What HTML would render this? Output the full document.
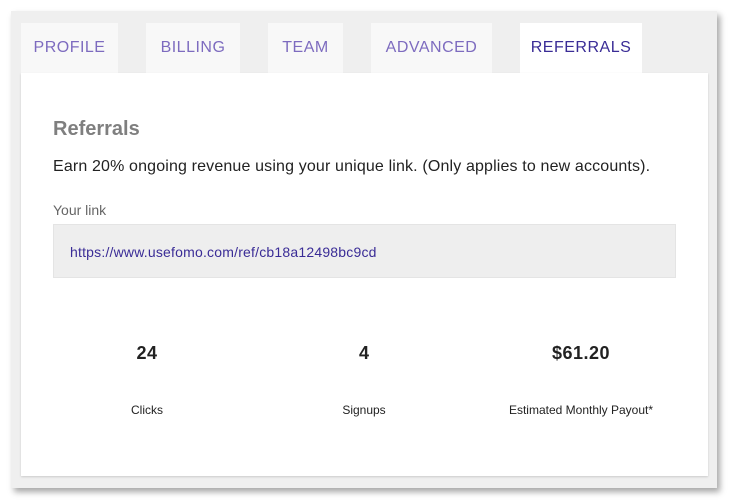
<!DOCTYPE html>
<html><head><style>
body{margin:0;width:734px;height:503px;background:#fff;position:relative;font-family:"Liberation Sans",sans-serif;overflow:hidden}
.frame{position:absolute;left:11px;top:11px;width:706px;height:477px;background:#efefef;box-shadow:3px 4px 6px rgba(0,0,0,.35)}
.tab{position:absolute;top:23px;height:50px;background:#f8f8f8;color:#7d6bbf;font-size:16px;line-height:50px;text-align:center;letter-spacing:.5px}
.tab.on{background:#fff;color:#3a2c96}
.card{position:absolute;left:21px;top:73px;width:687px;height:403px;background:#fff;box-shadow:0 1px 2px rgba(0,0,0,.15)}
.abs{position:absolute}
</style></head><body>
<div class="frame"></div>
<div class="tab" style="left:21px;width:97px">PROFILE</div>
<div class="tab" style="left:146px;width:94px">BILLING</div>
<div class="tab" style="left:268px;width:75px">TEAM</div>
<div class="tab" style="left:371px;width:121px">ADVANCED</div>
<div class="tab on" style="left:520px;width:122px">REFERRALS</div>
<div class="card"></div>
<div class="abs" style="left:53px;top:118px;font-size:20px;font-weight:bold;color:#7f7f7f">Referrals</div>
<div class="abs" style="left:53px;top:158px;font-size:16px;color:#222;letter-spacing:.15px">Earn 20% ongoing revenue using your unique link. (Only applies to new accounts).</div>
<div class="abs" style="left:53px;top:202px;font-size:14px;color:#666">Your link</div>
<div class="abs" style="left:53px;top:224px;width:623px;height:54px;background:#eee;border:1px solid #e4e4e4;box-sizing:border-box"></div>
<div class="abs" style="left:70px;top:244px;font-size:14px;color:#3a2c96;letter-spacing:.2px">https://www.usefomo.com/ref/cb18a12498bc9cd</div>
<div class="abs" style="left:47px;width:200px;top:343px;text-align:center;font-size:18px;font-weight:bold;color:#222;letter-spacing:.5px">24</div>
<div class="abs" style="left:264px;width:200px;top:343px;text-align:center;font-size:18px;font-weight:bold;color:#222">4</div>
<div class="abs" style="left:481px;width:200px;top:343px;text-align:center;font-size:18px;font-weight:bold;color:#222;letter-spacing:.5px">$61.20</div>
<div class="abs" style="left:47px;width:200px;top:403px;text-align:center;font-size:12px;color:#222">Clicks</div>
<div class="abs" style="left:264px;width:200px;top:403px;text-align:center;font-size:12px;color:#222">Signups</div>
<div class="abs" style="left:481px;width:200px;top:403px;text-align:center;font-size:12px;color:#222">Estimated Monthly Payout*</div>
</body></html>
